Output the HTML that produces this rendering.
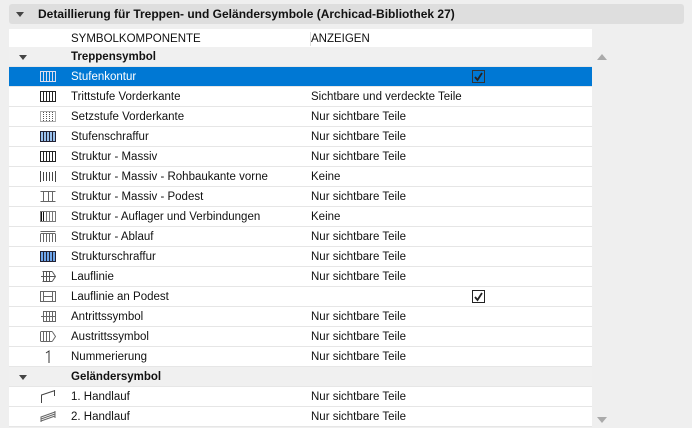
<!DOCTYPE html>
<html><head><meta charset="utf-8"><style>
body{margin:0;width:692px;height:427px;background:#efefef;font-family:"Liberation Sans",sans-serif;font-size:11.5px;color:#111;position:relative;overflow:hidden}
.hdr{position:absolute;left:9px;top:4px;width:675px;height:20px;background:#dedede;border-radius:3px;font-weight:bold;font-size:12px;line-height:21px}
.hdr span{position:absolute;left:29px}
.tri{position:absolute;width:0;height:0;border-left:4px solid transparent;border-right:4px solid transparent;border-top:5px solid #444}
.tbl{position:absolute;left:9px;top:29px;width:583px;height:398px;background:#fff}
.r{position:absolute;left:0;width:583px;height:19px;border-bottom:1px solid #e6e6e6;line-height:21px;background:#fff}
.r .a{position:absolute;left:62px}
.r .b{position:absolute;left:302px}
.r svg{position:absolute;left:31px;top:4px}
.g{background:#f0f0f0;font-weight:bold}
.sel{background:#0078d4;color:#fff}
.cb{position:absolute;left:463px;top:3px;width:11px;height:11px;border:1px solid #222}
</style></head><body>
<div class="hdr"><div class="tri" style="left:7px;top:8px"></div><span>Detaillierung für Treppen- und Geländersymbole (Archicad-Bibliothek 27)</span></div>
<div class="tbl">
<div class="r" style="top:0;height:18px;line-height:20px"><span class="a">SYMBOLKOMPONENTE</span><span style="position:absolute;left:301px;top:3px;width:1px;height:14px;background:#ddd"></span><span class="b">ANZEIGEN</span></div>
<div class="r g" style="top:18px"><div class="tri" style="left:10px;top:8px"></div><span class="a">Treppensymbol</span></div>
<div class="r sel" style="top:38px"><svg width="16" height="11"><g stroke="#dde" fill="none"><rect x=".5" y=".5" width="15" height="10"/><path d="M3.5 1v9M6.5 1v9M9.5 1v9M12.5 1v9"/></g></svg><span class="a">Stufenkontur</span><div class="cb" style="border-color:#333"><svg width="11" height="11" style="left:0;top:0"><path d="M2 6l2.5 3L9 2" stroke="#222" stroke-width="1.8" fill="none"/></svg></div></div>
<div class="r" style="top:58px"><svg width="16" height="11"><g stroke="#222" fill="none"><rect x=".5" y=".5" width="15" height="10"/><path d="M3.5 1v9M6.5 1v9M9.5 1v9M12.5 1v9"/></g></svg><span class="a">Trittstufe Vorderkante</span><span class="b">Sichtbare und verdeckte Teile</span></div>
<div class="r" style="top:78px"><svg width="16" height="11"><g stroke="#555" fill="none" stroke-dasharray="1 1"><rect x=".5" y=".5" width="15" height="10"/><path d="M3.5 1v9M6.5 1v9M9.5 1v9M12.5 1v9"/></g></svg><span class="a">Setzstufe Vorderkante</span><span class="b">Nur sichtbare Teile</span></div>
<div class="r" style="top:98px"><svg width="16" height="11"><g stroke="#223" fill="#9cc3ee"><rect x=".5" y=".5" width="15" height="10"/><path d="M3.5 1v9M6.5 1v9M9.5 1v9M12.5 1v9"/></g></svg><span class="a">Stufenschraffur</span><span class="b">Nur sichtbare Teile</span></div>
<div class="r" style="top:118px"><svg width="16" height="11"><g stroke="#222" fill="none"><rect x=".5" y=".5" width="15" height="10"/><path d="M3.5 1v9M6.5 1v9M9.5 1v9M12.5 1v9"/></g></svg><span class="a">Struktur - Massiv</span><span class="b">Nur sichtbare Teile</span></div>
<div class="r" style="top:138px"><svg width="16" height="11"><g stroke="#444" fill="none"><path d="M.5 0v11M15.5 0v11M3.5 1v9M6.5 1v9M9.5 1v9M12.5 1v9"/></g></svg><span class="a">Struktur - Massiv - Rohbaukante vorne</span><span class="b">Keine</span></div>
<div class="r" style="top:158px"><svg width="16" height="11"><g stroke="#666" fill="none"><path d="M.5 .5h15M.5 10.5h15M3.5 1v9M12.5 1v9M8.5 1v9"/></g></svg><span class="a">Struktur - Massiv - Podest</span><span class="b">Nur sichtbare Teile</span></div>
<div class="r" style="top:178px"><svg width="16" height="11"><g stroke="#777" fill="none"><rect x=".5" y=".5" width="15" height="10"/><path d="M6.5 1v9M9.5 1v9M12.5 1v9"/><path d="M1.5 1v9M3.5 1v9" stroke="#111"/></g></svg><span class="a">Struktur - Auflager und Verbindungen</span><span class="b">Keine</span></div>
<div class="r" style="top:198px"><svg width="16" height="11"><g stroke="#666" fill="none"><path d="M.5 .5h15M.5 2.5h15M.5 3v8M15.5 3v8M3.5 3v8M6.5 3v8M9.5 3v8M12.5 3v8"/></g></svg><span class="a">Struktur - Ablauf</span><span class="b">Nur sichtbare Teile</span></div>
<div class="r" style="top:218px"><svg width="16" height="11"><g stroke="#223" fill="#6fa6ea"><rect x=".5" y=".5" width="15" height="10"/><path d="M3.5 1v9M6.5 1v9M9.5 1v9M12.5 1v9"/></g></svg><span class="a">Strukturschraffur</span><span class="b">Nur sichtbare Teile</span></div>
<div class="r" style="top:238px"><svg width="16" height="11"><g stroke="#555" fill="none"><path d="M2.5 .5h10M2.5 10.5h10M3.5 1v9M6.5 1v9M9.5 1v9M12.5 1l3 4.5-3 4.5M1 5.5h14"/></g></svg><span class="a">Lauflinie</span><span class="b">Nur sichtbare Teile</span></div>
<div class="r" style="top:258px"><svg width="16" height="11"><g stroke="#666" fill="none"><rect x=".5" y=".5" width="15" height="10"/><path d="M3.5 1v9M12.5 1v9M3 5.5h10"/></g></svg><span class="a">Lauflinie an Podest</span><div class="cb"><svg width="11" height="11" style="left:0;top:0"><path d="M2 6l2.5 3L9 2" stroke="#222" stroke-width="1.8" fill="none"/></svg></div></div>
<div class="r" style="top:278px"><svg width="16" height="11"><g stroke="#666" fill="none"><rect x="3.5" y=".5" width="12" height="10"/><path d="M6.5 1v9M9.5 1v9M12.5 1v9M1 5.5h14"/></g></svg><span class="a">Antrittssymbol</span><span class="b">Nur sichtbare Teile</span></div>
<div class="r" style="top:298px"><svg width="16" height="11"><g stroke="#666" fill="none"><path d="M.5 .5h12M.5 10.5h12M.5 1v9M3.5 1v9M6.5 1v9M9.5 1v9M12.5 1l3 4.5-3 4.5"/></g></svg><span class="a">Austrittssymbol</span><span class="b">Nur sichtbare Teile</span></div>
<div class="r" style="top:318px"><svg width="16" height="13" style="top:3px"><path d="M6 3l3-2v12" stroke="#333" fill="none"/></svg><span class="a">Nummerierung</span><span class="b">Nur sichtbare Teile</span></div>
<div class="r g" style="top:338px"><div class="tri" style="left:10px;top:8px"></div><span class="a">Geländersymbol</span></div>
<div class="r" style="top:358px"><svg width="16" height="13" style="top:3px"><path d="M1.5 13V5L15 .5M14.5 0v6" stroke="#444" fill="none"/></svg><span class="a">1. Handlauf</span><span class="b">Nur sichtbare Teile</span></div>
<div class="r" style="top:378px"><svg width="16" height="13" style="top:3px"><path d="M1 12V7L15 2M1 9l14-5M1 11l14-5M15 1v7" stroke="#666" fill="none"/></svg><span class="a">2. Handlauf</span><span class="b">Nur sichtbare Teile</span></div>
</div>
<div class="tri" style="left:597px;top:54px;border-top:none;border-bottom:6px solid #aaa;border-left-width:5px;border-right-width:5px"></div>
<div class="tri" style="left:597px;top:417px;border-top:6px solid #aaa;border-left-width:5px;border-right-width:5px"></div>
</body></html>
